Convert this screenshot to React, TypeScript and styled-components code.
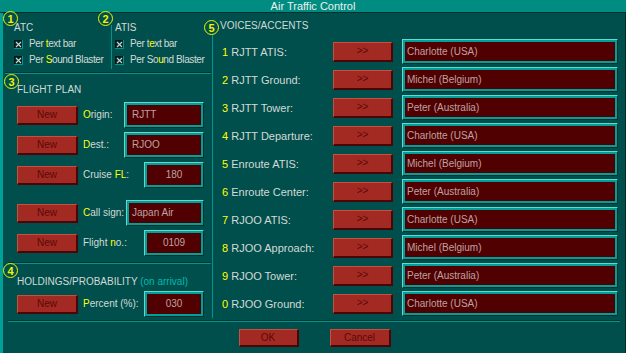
import React from "react";
import styled, { createGlobalStyle } from "styled-components";

const GlobalStyle = createGlobalStyle`
  html, body { margin: 0; padding: 0; background: #004f4c; }
  * { box-sizing: border-box; }
`;

const Window = styled.div`
  width: 626px;
  height: 353px;
  background: #004f4c;
  display: flex;
  flex-direction: column;
  overflow: hidden;
  font-family: "Liberation Sans", Arial, sans-serif;
  font-size: 10px;
  line-height: 12px;
  color: #d2dad6;
`;

const TitleBar = styled.div`
  height: 13px;
  flex: none;
  background: #008c80;
  border-bottom: 1px solid #00302c;
  color: #eaf2f0;
  text-align: center;
  font-size: 11px;
  line-height: 12px;
`;

const Body = styled.div`
  flex: 1;
  display: flex;
  flex-direction: column;
  border-left: 3px solid #00a098;
  border-right: 1px solid #00302c;
`;

const Main = styled.div`
  display: grid;
  grid-template-columns: 209px 1fr;
  height: 307px;
`;

const LeftCol = styled.div`
  display: flex;
  flex-direction: column;
`;

const Badge = styled.span<{ $left: number; $top: number }>`
  position: absolute;
  left: ${(p) => p.$left}px;
  top: ${(p) => p.$top}px;
  width: 15px;
  height: 15px;
  border: 1.5px solid #f4f400;
  border-radius: 50%;
  color: #f4f400;
  font-weight: bold;
  font-size: 11px;
  line-height: 12px;
  display: flex;
  align-items: center;
  justify-content: center;
  background: #004f4c;
`;

const TopBlock = styled.div`
  display: flex;
  height: 59px;
`;

const OptionPanel = styled.div<{ $width?: number; $pad: number }>`
  position: relative;
  ${(p) => (p.$width ? `width: ${p.$width}px;` : "flex: 1;")}
  padding: 9px 0 0 ${(p) => p.$pad}px;
`;

const VDivider = styled.div`
  width: 1px;
  margin: 12px 0 3px;
  background: #00948c;
`;

const PanelTitle = styled.div<{ $mb: number }>`
  height: 12px;
  margin-bottom: ${(p) => p.$mb}px;
  white-space: nowrap;
`;

const CheckRow = styled.div`
  display: flex;
  align-items: center;
  gap: 6px;
  height: 16px;
  white-space: nowrap;
  letter-spacing: -0.4px;
`;

const Hi = styled.span`
  color: #ffff00;
`;

const Dim = styled.span`
  color: #00b8b0;
`;

const HSep = styled.div<{ $ml: number; $mr: number }>`
  height: 2px;
  flex: none;
  margin: 0 ${(p) => p.$mr}px 0 ${(p) => p.$ml}px;
  border-top: 1px solid #003431;
  border-bottom: 1px solid #00968e;
`;

const Section = styled.div<{ $h: number; $pt: number }>`
  position: relative;
  height: ${(p) => p.$h}px;
  padding: ${(p) => p.$pt}px 8px 0 14px;
`;

const Rows = styled.div<{ $mt: number }>`
  display: flex;
  flex-direction: column;
  gap: 4px;
  margin-top: ${(p) => p.$mt}px;
`;

const FormRow = styled.div<{ $extra?: number }>`
  display: flex;
  align-items: center;
  height: 26px;
  margin-top: ${(p) => p.$extra || 0}px;
  white-space: nowrap;
`;

const FormLabel = styled.span`
  margin-left: 5px;
`;

const RedButton = styled.button<{ $w: number; $h: number }>`
  width: ${(p) => p.$w}px;
  height: ${(p) => p.$h}px;
  flex: none;
  padding: 0;
  background: #a22a22;
  border-style: solid;
  border-width: 1px 2px 2px 1px;
  border-color: #c4503e #4a0606 #4a0606 #c4503e;
  color: #5e0808;
  font-family: "Liberation Sans", Arial, sans-serif;
  font-size: 10px;
  line-height: 12px;
`;

const Field = styled.div<{ $w?: number; $h: number; $center?: boolean; $pl?: number }>`
  ${(p) => (p.$w ? `width: ${p.$w}px;` : "flex: 1;")}
  height: ${(p) => p.$h}px;
  flex-shrink: 0;
  margin-left: auto;
  display: flex;
  align-items: center;
  justify-content: ${(p) => (p.$center ? "center" : "flex-start")};
  padding-left: ${(p) => (p.$center ? 0 : (p.$pl ?? 8) - 4)}px;
  background: #500000;
  border-style: solid;
  border-width: 1px;
  border-color: #66d8d0 #00302c #00302c #66d8d0;
  box-shadow: inset 0 0 0 2px #00a098;
  color: #bea2a2;
  font-size: 10px;
  white-space: nowrap;
`;

const RightCol = styled.div`
  position: relative;
  padding-top: 7px;
`;

const VoicePanel = styled.div`
  height: 298px;
  border-left: 1px solid #00948c;
  padding-left: 7px;
  padding-right: 7px;
`;

const VoiceRows = styled.div`
  display: flex;
  flex-direction: column;
  gap: 3px;
  margin-top: 7px;
`;

const VoiceRow = styled.div`
  display: flex;
  align-items: center;
  height: 25px;
`;

const VoiceLabel = styled.span`
  width: 113px;
  padding-left: 2px;
  white-space: nowrap;
  font-size: 11px;
`;

const Gap = styled.span<{ $w: number }>`
  width: ${(p) => p.$w}px;
  flex: none;
`;

const ButtonBar = styled.div`
  display: flex;
  justify-content: center;
  gap: 31px;
  padding-top: 7px;
  padding-left: 1px;
`;

const CheckBox = () => (
  <svg width="9" height="9" viewBox="0 0 9 9" style={{ flex: "none" }}>
    <rect x="0" y="0" width="9" height="9" fill="#002826" />
    <path d="M0 0.5H8.5M0.5 0V8.5" stroke="#001a18" strokeWidth="1" />
    <path d="M0 8.5H9M8.5 0V9" stroke="#00948c" strokeWidth="1" />
    <path d="M2 2L7 7M7 2L2 7" stroke="#cfd4d4" strokeWidth="1.1" />
  </svg>
);

const voices: [string, string, string][] = [
  ["1", "RJTT ATIS:", "Charlotte (USA)"],
  ["2", "RJTT Ground:", "Michel (Belgium)"],
  ["3", "RJTT Tower:", "Peter (Australia)"],
  ["4", "RJTT Departure:", "Charlotte (USA)"],
  ["5", "Enroute ATIS:", "Michel (Belgium)"],
  ["6", "Enroute Center:", "Peter (Australia)"],
  ["7", "RJOO ATIS:", "Charlotte (USA)"],
  ["8", "RJOO Approach:", "Michel (Belgium)"],
  ["9", "RJOO Tower:", "Peter (Australia)"],
  ["0", "RJOO Ground:", "Charlotte (USA)"],
];

export default function App() {
  return (
    <>
      <GlobalStyle />
      <Window>
        <TitleBar>Air Traffic Control</TitleBar>
        <Body>
          <Main>
            <LeftCol>
              <TopBlock>
                <OptionPanel $width={108} $pad={11}>
                  <Badge $left={0} $top={-2}>1</Badge>
                  <PanelTitle $mb={2}>ATC</PanelTitle>
                  <CheckRow>
                    <CheckBox />
                    <span>
                      Per <Hi>t</Hi>ext bar
                    </span>
                  </CheckRow>
                  <CheckRow>
                    <CheckBox />
                    <span>
                      Per <Hi>S</Hi>ound Blaster
                    </span>
                  </CheckRow>
                </OptionPanel>
                <VDivider />
                <OptionPanel $pad={3}>
                  <Badge $left={-14} $top={-2}>2</Badge>
                  <PanelTitle $mb={2}>ATIS</PanelTitle>
                  <CheckRow>
                    <CheckBox />
                    <span>
                      Per t<Hi>e</Hi>xt bar
                    </span>
                  </CheckRow>
                  <CheckRow>
                    <CheckBox />
                    <span>
                      Per So<Hi>u</Hi>nd Blaster
                    </span>
                  </CheckRow>
                </OptionPanel>
              </TopBlock>
              <HSep $ml={2} $mr={1} />
              <Section $h={188} $pt={10}>
                <Badge $left={1} $top={0}>3</Badge>
                <PanelTitle $mb={0}>FLIGHT PLAN</PanelTitle>
                <Rows $mt={6}>
                  <FormRow>
                    <RedButton $w={61} $h={19}>New</RedButton>
                    <FormLabel>
                      <Hi>O</Hi>rigin:
                    </FormLabel>
                    <Field $w={80} $h={26} $pl={11}>RJTT</Field>
                  </FormRow>
                  <FormRow>
                    <RedButton $w={61} $h={19}>New</RedButton>
                    <FormLabel>
                      <Hi>D</Hi>est.:
                    </FormLabel>
                    <Field $w={80} $h={26} $pl={11}>RJOO</Field>
                  </FormRow>
                  <FormRow>
                    <RedButton $w={61} $h={19}>New</RedButton>
                    <FormLabel>
                      Cruise <Hi>FL</Hi>:
                    </FormLabel>
                    <Field $w={60} $h={26} $center>180</Field>
                  </FormRow>
                  <FormRow $extra={8}>
                    <RedButton $w={61} $h={19}>New</RedButton>
                    <FormLabel>
                      <Hi>C</Hi>all sign:
                    </FormLabel>
                    <Field $w={78} $h={26} $pl={9}>Japan Air</Field>
                  </FormRow>
                  <FormRow>
                    <RedButton $w={61} $h={19}>New</RedButton>
                    <FormLabel>
                      Flight <Hi>n</Hi>o.:
                    </FormLabel>
                    <Field $w={60} $h={26} $center>0109</Field>
                  </FormRow>
                </Rows>
              </Section>
              <HSep $ml={5} $mr={1} />
              <Section $h={56} $pt={12}>
                <Badge $left={0} $top={-1}>4</Badge>
                <PanelTitle $mb={0}>
                  HOLDINGS/PROBABILITY <Dim>(on arrival)</Dim>
                </PanelTitle>
                <Rows $mt={3}>
                  <FormRow>
                    <RedButton $w={61} $h={19}>New</RedButton>
                    <FormLabel>
                      <Hi>P</Hi>ercent (%):
                    </FormLabel>
                    <Field $w={60} $h={26} $center>030</Field>
                  </FormRow>
                </Rows>
              </Section>
            </LeftCol>
            <RightCol>
              <Badge $left={-8} $top={7}>5</Badge>
              <VoicePanel>
                <PanelTitle $mb={0}>VOICES/ACCENTS</PanelTitle>
                <VoiceRows>
                  {voices.map(([n, label, voice]) => (
                    <VoiceRow key={n}>
                      <VoiceLabel>
                        <Hi>{n}</Hi> {label}
                      </VoiceLabel>
                      <RedButton $w={60} $h={20}>&gt;&gt;</RedButton>
                      <Gap $w={8} />
                      <Field $w={216} $h={25} $pl={8}>{voice}</Field>
                    </VoiceRow>
                  ))}
                </VoiceRows>
              </VoicePanel>
            </RightCol>
          </Main>
          <HSep $ml={5} $mr={5} />
          <ButtonBar>
            <RedButton $w={60} $h={18}>OK</RedButton>
            <RedButton $w={61} $h={18}>Cancel</RedButton>
          </ButtonBar>
        </Body>
      </Window>
    </>
  );
}
